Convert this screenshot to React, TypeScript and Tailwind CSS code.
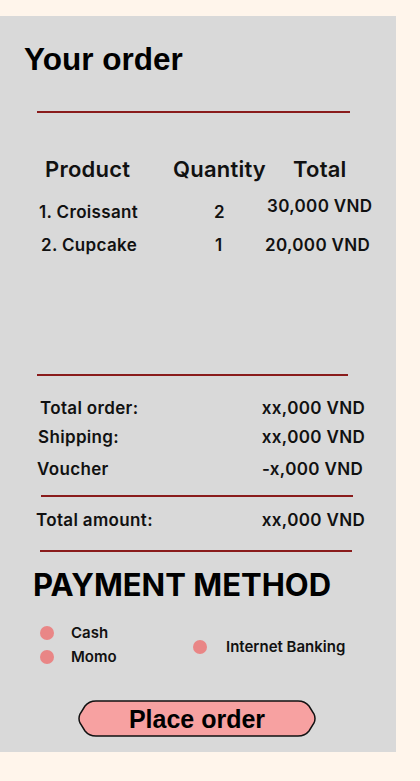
const items = [
	{name: "1. Croissant", qty: "2", total: "30,000 VND"},
	{name: "2. Cupcake", qty: "1", total: "20,000 VND"},
];

const Divider = ({className}: {className: string}) => (
	<div className={`h-[2px] bg-[#8a1c1c] ${className}`} />
);

const Bullet = () => <span className="block w-[14px] h-[14px] rounded-full bg-[#e98686]" />;

const App = () => {
	return (
		<div className="min-h-[781px] bg-[#fff5eb] pt-4 font-['Inter',sans-serif] text-[#111]">
			<section className="w-[396px] h-[736px] bg-[#d9d9d9] flex flex-col">
				<h1 className="mt-[24px] h-[40px] pl-[24px] flex items-center font-['Liberation_Sans',Arial,sans-serif] font-bold text-[31.5px] text-black">
					Your order
				</h1>
				<Divider className="mt-[31px] ml-[37px] w-[313px]" />

				<div className="mt-[41px] h-[30px] flex items-center pl-[45px] text-[22px] tracking-[0.01em] font-semibold">
					<span className="w-[128px]">Product</span>
					<span className="w-[120px]">Quantity</span>
					<span>Total</span>
				</div>

				<div className="mt-[14px] h-[30px] flex items-center text-[17px] tracking-[0.02em] font-semibold">
					<span className="w-[214px] pl-[39px]">{items[0].name}</span>
					<span className="w-[53px]">{items[0].qty}</span>
					<span className="mb-[12px]">{items[0].total}</span>
				</div>
				<div className="mt-[3px] h-[30px] flex items-center text-[17px] tracking-[0.02em] font-semibold">
					<span className="w-[215px] pl-[41px]">{items[1].name}</span>
					<span className="w-[50px]">{items[1].qty}</span>
					<span>{items[1].total}</span>
				</div>

				<Divider className="mt-[113px] ml-[37px] w-[311px]" />

				<div className="mt-[20px] h-[26px] flex items-center justify-between pl-[40px] pr-[31px] text-[17px] tracking-[0.02em] font-semibold">
					<span>Total order:</span>
					<span>xx,000 VND</span>
				</div>
				<div className="mt-[3px] h-[26px] flex items-center justify-between pl-[38px] pr-[31px] text-[17px] tracking-[0.02em] font-semibold">
					<span>Shipping:</span>
					<span>xx,000 VND</span>
				</div>
				<div className="mt-[6px] h-[26px] flex items-center justify-between pl-[37px] pr-[33px] text-[17px] tracking-[0.02em] font-semibold">
					<span>Voucher</span>
					<span>-x,000 VND</span>
				</div>

				<Divider className="mt-[12px] ml-[41px] w-[312px]" />

				<div className="mt-[11px] h-[26px] flex items-center justify-between pl-[36px] pr-[31px] text-[17px] tracking-[0.02em] font-semibold">
					<span>Total amount:</span>
					<span>xx,000 VND</span>
				</div>

				<Divider className="mt-[16px] ml-[40px] w-[312px]" />

				<h2 className="mt-[13px] h-[40px] pl-[33px] flex items-center text-[31px] font-bold text-black">
					PAYMENT METHOD
				</h2>

				<div className="mt-[16px] flex text-[15px] font-semibold">
					<div className="pl-[40px] w-[193px] flex flex-col">
						<div className="h-[24px] flex items-center gap-[17px]">
							<Bullet />
							<span>Cash</span>
						</div>
						<div className="h-[24px] flex items-center gap-[17px]">
							<Bullet />
							<span>Momo</span>
						</div>
					</div>
					<div className="h-[48px] flex items-center gap-[19px] pt-[4px]">
						<Bullet />
						<span>Internet Banking</span>
					</div>
				</div>

				<button
					type="button"
					className="relative mt-[31px] ml-[78px] w-[238px] h-[37px] flex items-center justify-center">
					<svg className="absolute inset-0" width="238" height="37" viewBox="0 0 238 37">
						<path
							d="M18 1 H220 Q227 1 231 6 L236 14 Q238 18.5 236 23 L231 31 Q227 36 220 36 H18 Q11 36 7 31 L2 23 Q0 18.5 2 14 L7 6 Q11 1 18 1 Z"
							fill="#f7a1a1"
							stroke="#111"
							strokeWidth="1.5"
						/>
					</svg>
					<span className="relative pt-[2px] font-['Liberation_Sans',Arial,sans-serif] font-bold text-[25px] text-black">
						Place order
					</span>
				</button>
			</section>
		</div>
	);
};

export default App;
